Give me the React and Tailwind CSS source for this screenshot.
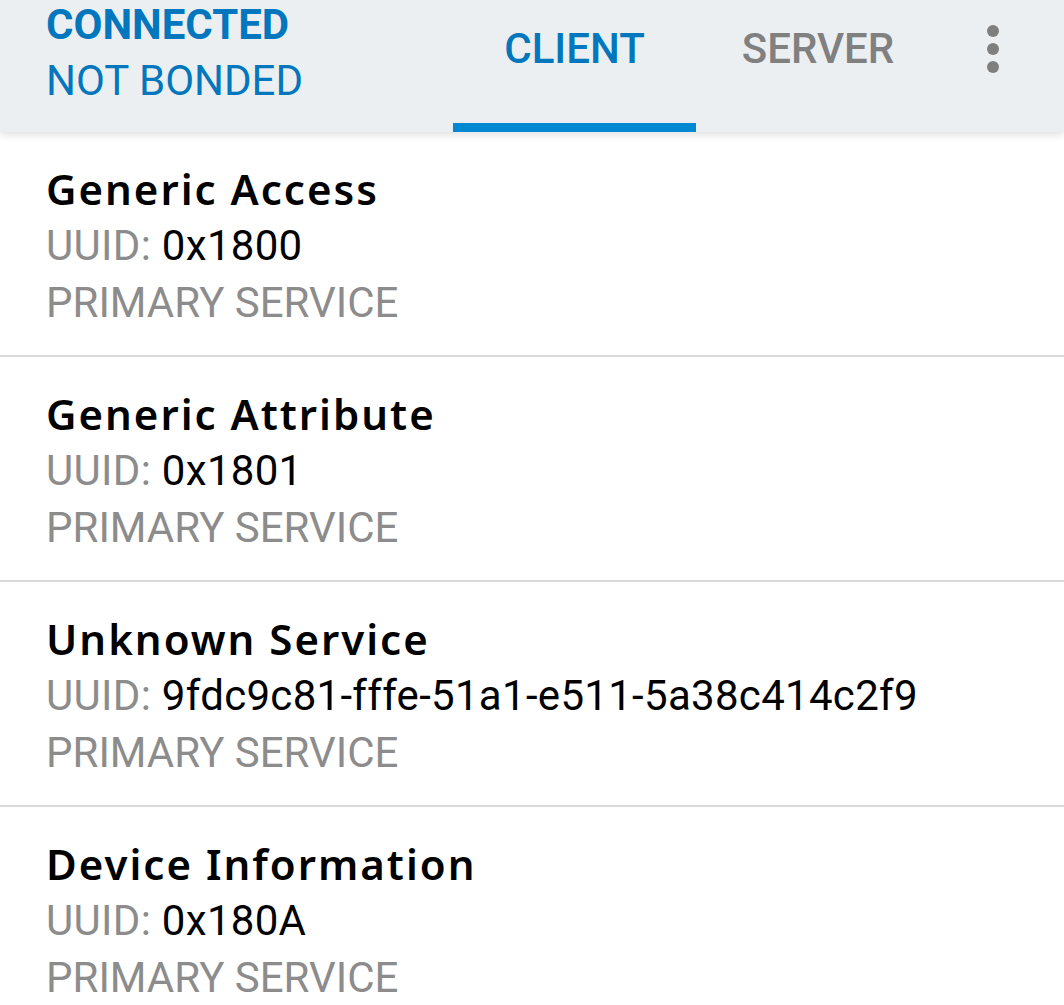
import React from 'react';

const services = [
  { name: 'Generic Access', uuid: '0x1800' },
  { name: 'Generic Attribute', uuid: '0x1801' },
  { name: 'Unknown Service', uuid: '9fdc9c81-fffe-51a1-e511-5a38c414c2f9' },
  { name: 'Device Information', uuid: '0x180A' },
];

const roboto = { fontFamily: 'Roboto, "Liberation Sans", sans-serif' };

const ServiceRow = ({ service }) => (
  <div className="border-b-2 border-[#dadada] pl-[46px] pt-[28px] pb-[24px]">
    <div className="text-[42px] leading-[57px] font-semibold tracking-[2px] text-black" style={{ fontFamily: '"Noto Sans", "Open Sans", sans-serif' }}>
      {service.name}
    </div>
    <div className="text-[42px] leading-[57px] tracking-[0.3px]" style={roboto}>
      <span className="text-[#8c8c8c]">UUID: </span>
      <span className="text-black">{service.uuid}</span>
    </div>
    <div className="text-[42px] leading-[57px] text-[#8c8c8c]" style={roboto}>
      PRIMARY SERVICE
    </div>
  </div>
);

export default function App() {
  return (
    <div className="w-[1064px] h-[1005px] overflow-hidden bg-white" style={roboto}>
      {/* toolbar with tabs */}
      <div className="relative z-10 h-[132px] bg-[#eceff1] flex shadow-[0_3px_8px_rgba(0,0,0,0.12)]">
        <div className="w-[453px] pl-[46px] flex flex-col gap-[6px]">
          <div className="text-[42px] leading-[50px] font-bold text-[#0277bd]">CONNECTED</div>
          <div className="text-[42px] leading-[50px] text-[#0277bd]">NOT BONDED</div>
        </div>
        <div className="w-[243px] relative flex justify-center pt-[21px]">
          <span className="text-[42px] leading-[56px] font-medium text-[#0277bd]">CLIENT</span>
          <div className="absolute left-0 right-0 bottom-0 h-[9px] bg-[#0288d1]" />
        </div>
        <div className="w-[244px] flex justify-center pt-[21px]">
          <span className="text-[42px] leading-[56px] font-medium text-[#808080]">SERVER</span>
        </div>
        <div className="pl-[47px] pt-[25px]">
          <div className="flex flex-col gap-[6px] items-center">
            <span className="w-[12px] h-[12px] rounded-full bg-[#7f7f7f]" />
            <span className="w-[12px] h-[12px] rounded-full bg-[#7f7f7f]" />
            <span className="w-[12px] h-[12px] rounded-full bg-[#7f7f7f]" />
          </div>
        </div>
      </div>
      <div>
        {services.map((s) => (
          <ServiceRow key={s.name} service={s} />
        ))}
      </div>
    </div>
  );
}
